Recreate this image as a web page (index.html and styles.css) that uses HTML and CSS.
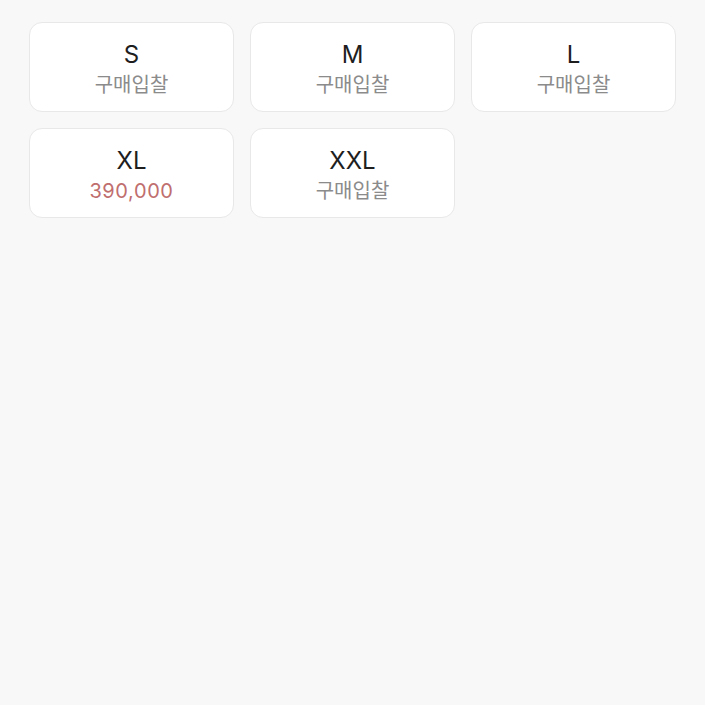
FILE: index.html
```html
<!DOCTYPE html>
<html lang="ko">
<head>
    <meta charset="UTF-8">
    <meta name="viewport" content="width=device-width, initial-scale=1.0">
    <title>사이즈 선택</title>
    <link rel="stylesheet" href="styles.css">
</head>
<body>
    <div class="size-grid">
        <div class="size-card">
            <div class="size-name">S</div>
            <div class="size-price">구매입찰</div>
        </div>
        <div class="size-card">
            <div class="size-name">M</div>
            <div class="size-price">구매입찰</div>
        </div>
        <div class="size-card">
            <div class="size-name">L</div>
            <div class="size-price">구매입찰</div>
        </div>
        <div class="size-card">
            <div class="size-name">XL</div>
            <div class="size-price has-price">390,000</div>
        </div>
        <div class="size-card">
            <div class="size-name">XXL</div>
            <div class="size-price">구매입찰</div>
        </div>
    </div>
</body>
</html>
```

FILE: styles.css
```css
body {
    margin: 0;
    padding: 0;
    background-color: #f8f8f8;
    font-family: Inter, "Noto Sans CJK KR", sans-serif;
    height: 100vh;
}
.size-grid {
    display: grid;
    grid-template-columns: repeat(3, 205px);
    column-gap: 16px;
    row-gap: 16px;
    padding: 22px 29px;
}
.size-card {
    box-sizing: border-box;
    height: 90px;
    padding-top: 5px;
    background-color: #fff;
    border: 1px solid #e8e8e8;
    border-radius: 13px;
    display: flex;
    flex-direction: column;
    align-items: center;
    justify-content: center;
}
.size-name {
    font-size: 24px;
    line-height: 30px;
    color: #1e1e1e;
}
.size-price {
    font-size: 20px;
    line-height: 30px;
    color: #8b8b8b;
}
.size-price.has-price {
    color: #c06e6e;
    letter-spacing: 0.6px;
}
```
